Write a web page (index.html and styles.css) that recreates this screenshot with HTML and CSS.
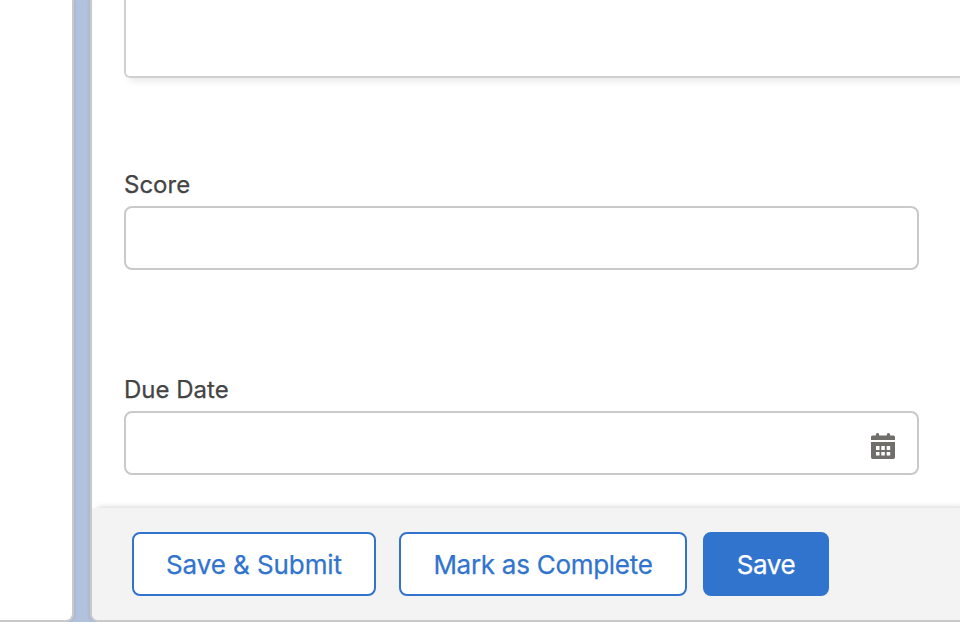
FILE: index.html
```html
<!DOCTYPE html>
<html lang="en">
<head>
<meta charset="utf-8">
<title>Task</title>
<link rel="stylesheet" href="styles.css">
</head>
<body>
<div class="workspace">
  <aside class="side-panel"></aside>
  <main class="panel">
    <div class="form">
      <div class="textarea"></div>
      <div class="field score">
        <label class="label">Score</label>
        <div class="input"></div>
      </div>
      <div class="field due">
        <label class="label">Due Date</label>
        <div class="input">
          <svg class="calendar" width="24" height="26" viewBox="0 0 24 26" fill="#706e6b">
            <path d="M1.5 2.5H4.8V1.7a1.7 1.7 0 0 1 3.4 0V2.5h7.6V1.7a1.7 1.7 0 0 1 3.4 0V2.5h3.3A1.5 1.5 0 0 1 24 4v3H0V4a1.5 1.5 0 0 1 1.5-1.5z"/>
            <path fill-rule="evenodd" d="M0 9h24v15.3a1.7 1.7 0 0 1-1.7 1.7H1.7A1.7 1.7 0 0 1 0 24.3zM5 13v4h3.5V13zm5.3 0v4h3.5V13zm5.4 0v4h3.5V13zM5 19v3.4h3.5V19zm5.3 0v3.4h3.5V19zm5.4 0v3.4h3.5V19z"/>
          </svg>
        </div>
      </div>
    </div>
    <footer class="footer">
      <button class="button submit">Save &amp; Submit</button>
      <button class="button complete">Mark as Complete</button>
      <button class="button primary">Save</button>
    </footer>
  </main>
</div>
</body>
</html>
```
FILE: styles.css
```css
* { box-sizing: border-box; }
body {
  margin: 0;
  overflow: hidden;
  background: #b2c2dc;
  font-family: Inter, "Liberation Sans", sans-serif;
}
.workspace {
  display: grid;
  grid-template-columns: 74px 870px;
  column-gap: 16px;
  height: 622px;
}
.side-panel {
  background: #fff;
  border: solid #c9c9c9;
  border-width: 0 2px 2px 0;
  border-radius: 0 0 8px 0;
  box-shadow: 0 0 4px rgba(0, 0, 0, .1);
}
.panel {
  display: flex;
  flex-direction: column;
  background: #fff;
  border: solid #c9c9c9;
  border-width: 0 0 2px 2px;
  border-radius: 0 0 0 8px;
  box-shadow: 0 0 4px rgba(0, 0, 0, .1);
  overflow: hidden;
}
.form {
  flex: none;
  height: 508px;
  padding-left: 32px;
}
.textarea {
  height: 78px;
  border: solid #d0d0d0;
  border-width: 0 0 2px 2px;
  border-radius: 0 0 0 6px;
  box-shadow: 4px 4px 6px rgba(0, 0, 0, .08);
}
.score { margin-top: 92px; }
.due { margin-top: 105px; }
.label {
  display: block;
  height: 36px;
  line-height: 30px;
  font-size: 24px;
  letter-spacing: 0;
  -webkit-text-stroke: .25px currentColor;
  color: #444;
}
.input {
  display: flex;
  align-items: center;
  justify-content: flex-end;
  width: 795px;
  height: 64px;
  padding: 6px 22px 0 0;
  border: 2px solid #c9c9c9;
  border-radius: 8px;
}
.footer {
  display: flex;
  flex: none;
  height: 112px;
  align-items: flex-start;
  padding: 24px 0 0 40px;
  background: #f3f3f3;
  box-shadow: 6px 0 6px rgba(0, 0, 0, .22);
}
.button {
  height: 64px;
  padding: 2px 0 0;
  border: 2px solid #3174cd;
  border-radius: 8px;
  background: #fff;
  color: #3174cd;
  font: 400 26px/58px Inter, "Liberation Sans", sans-serif;
  -webkit-text-stroke: .25px currentColor;
  white-space: nowrap;
}
.submit { width: 244px; letter-spacing: -.08px; }
.complete { width: 288px; margin-left: 23px; letter-spacing: -.28px; }
.primary { width: 126px; margin-left: 16px; background: #3174cd; color: #fff; letter-spacing: -.4px; }
```
